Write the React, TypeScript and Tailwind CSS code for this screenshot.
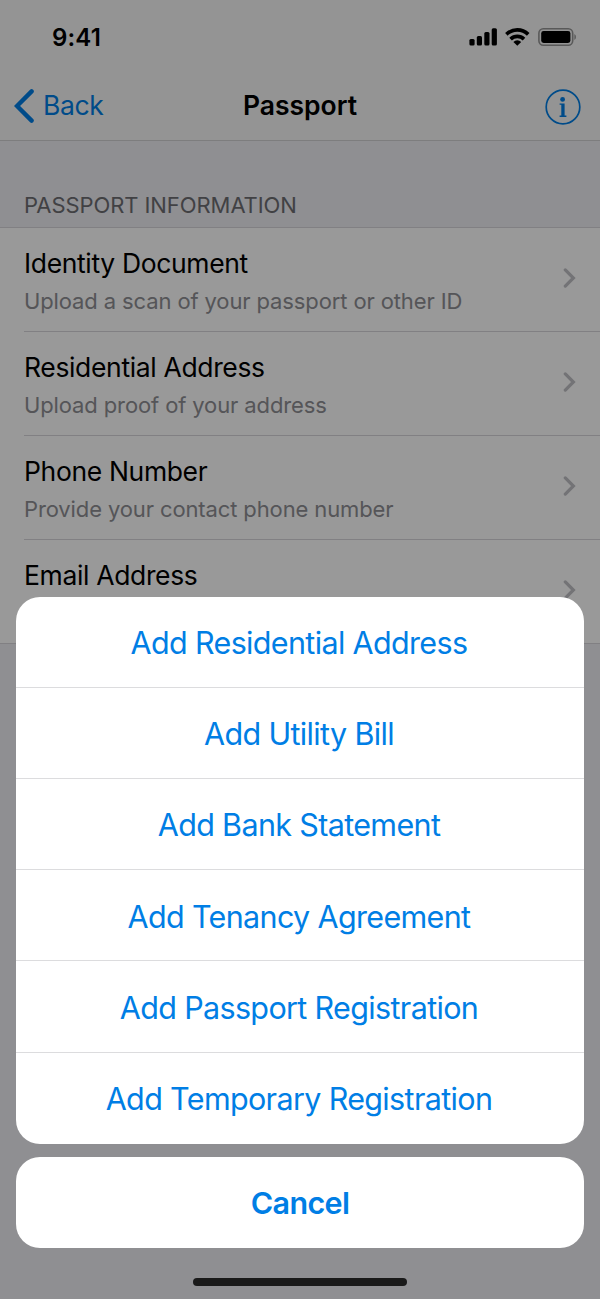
import React from 'react';

interface PassportField {
  title: string;
  subtitle: string;
}

const fields: PassportField[] = [
  { title: 'Identity Document', subtitle: 'Upload a scan of your passport or other ID' },
  { title: 'Residential Address', subtitle: 'Upload proof of your address' },
  { title: 'Phone Number', subtitle: 'Provide your contact phone number' },
  { title: 'Email Address', subtitle: 'Provide your email address' },
];

const actions = [
  'Add Residential Address',
  'Add Utility Bill',
  'Add Bank Statement',
  'Add Tenancy Agreement',
  'Add Passport Registration',
  'Add Temporary Registration',
];

const StatusBar: React.FC = () => (
  <div className="flex h-[72px] items-center justify-between pr-[23px] pl-[52px] pt-0.5">
    <span className="pt-px text-[24px] font-semibold tracking-[0.15px]">9:41</span>
    <div className="flex items-center">
      <svg className="h-[18px] w-[28px]" viewBox="0 0 28 18" fill="currentColor">
        <rect x="0.4" y="11" width="5.2" height="6.4" rx="1.5" />
        <rect x="7.8" y="8" width="5.2" height="9.4" rx="1.5" />
        <rect x="15.3" y="4" width="5.2" height="13.4" rx="1.5" />
        <rect x="22.7" y="0.2" width="5.2" height="17.2" rx="1.5" />
      </svg>
      <svg className="ml-2 h-[18px] w-[25px]" viewBox="0 0 25 18" fill="none" stroke="currentColor" strokeWidth="3.7">
        <path d="M1.4 6.3a15.7 15.7 0 0 1 21.8 0" />
        <path d="M5.6 11.1a9.7 9.7 0 0 1 13.4 0" />
        <path d="M12.3 17.8l-3.9-3.9a5.7 5.7 0 0 1 7.8 0z" fill="currentColor" stroke="none" />
      </svg>
      <svg className="ml-2 h-[18px] w-[39px]" viewBox="0 0 39 18">
        <rect x="0.9" y="0.8" width="33.8" height="16.4" rx="4.4" fill="none" stroke="currentColor" strokeOpacity="0.4" strokeWidth="1.6" />
        <rect x="3.2" y="3" width="29.2" height="12" rx="2.4" fill="currentColor" />
        <path d="M36.4 6v6a3.6 3.6 0 0 0 0-6z" fill="currentColor" fillOpacity="0.4" />
      </svg>
    </div>
  </div>
);

const NavBar: React.FC = () => (
  <div className="grid h-[68px] grid-cols-[1fr_auto_1fr] items-center">
    <button className="flex items-center pl-[14px] text-[#007ee5]">
      <svg className="mr-[9px] h-[36px] w-[20px]" viewBox="0 0 20 36" fill="none" stroke="currentColor" strokeWidth="4.4" strokeLinecap="round" strokeLinejoin="miter">
        <path d="M17.6 3.4L3 18l14.6 14.6" />
      </svg>
      <span className="text-[26.5px] tracking-[-0.4px]">Back</span>
    </button>
    <h1 className="text-[26.5px] font-semibold">Passport</h1>
    <div className="flex justify-end pr-[19px] text-[#007ee5]">
      <svg className="mt-0.5 h-[36px] w-[36px]" viewBox="0 0 36 36" fill="currentColor">
        <circle cx="18" cy="18" r="16.8" fill="none" stroke="currentColor" strokeWidth="1.7" />
        <circle cx="17.6" cy="10.4" r="2.4" />
        <path d="M14.6 14.4h5v12.2h1.8v1.4h-6.8v-1.4h1.7V15.8h-1.7z" />
      </svg>
    </div>
  </div>
);

const FieldRow: React.FC<{ field: PassportField; last: boolean }> = ({ field, last }) => (
  <div className={last ? 'bg-white' : 'bg-white pl-6'}>
    <div
      className={`flex h-[104px] items-center justify-between border-b border-[#d7d6da] pr-6 ${last ? 'pl-6' : ''}`}
    >
      <div className="pt-0.5">
        <p className="text-[26.5px] leading-8 tracking-[-0.35px]">{field.title}</p>
        <p className="mt-2 text-[22px] leading-7 tracking-[-0.12px] text-[#8e8e93]">{field.subtitle}</p>
      </div>
      <svg className="mb-[3px] h-[20px] w-[13px] text-[#c0c0c5]" viewBox="0 0 13 20" fill="none" stroke="currentColor" strokeWidth="3.2" strokeLinecap="round">
        <path d="M2.3 1.9L10.4 10l-8.1 8.1" />
      </svg>
    </div>
  </div>
);

const ActionSheet: React.FC = () => (
  <div className="absolute inset-0 flex flex-col items-stretch justify-end bg-black/40 px-4 text-[30.5px] tracking-[-0.65px] text-[#007ee5]">
    <div className="divide-y divide-[#dcdcde] overflow-hidden rounded-[24px] bg-white">
      {actions.map((action) => (
        <button key={action} className="flex h-[91.1px] w-full items-center justify-center pt-0.5 pr-0.5">
          {action}
        </button>
      ))}
    </div>
    <button className="mt-[13.4px] flex h-[91px] items-center justify-center rounded-[24px] bg-white font-semibold">
      Cancel
    </button>
    <div className="mt-[30px] mb-[13px] h-2 w-[214px] self-center rounded-full bg-[#1a1a1a]" />
  </div>
);

const App: React.FC = () => {
  return (
    <div className="relative h-[1299px] w-[600px] overflow-hidden bg-[#efeff4] font-['Inter',sans-serif] text-black">
      <header className="border-b border-[#d0d0d3] bg-[#f7f7f7]">
        <StatusBar />
        <NavBar />
      </header>

      <main>
        <h2 className="flex h-[87px] items-end border-b border-[#d7d6da] px-6 pb-[5px] text-[22px] tracking-[-0.08px] text-[#6d6d72]">
          PASSPORT INFORMATION
        </h2>
        {fields.map((field, i) => (
          <FieldRow key={field.title} field={field} last={i === fields.length - 1} />
        ))}
      </main>

      <ActionSheet />
    </div>
  );
};

export default App;
